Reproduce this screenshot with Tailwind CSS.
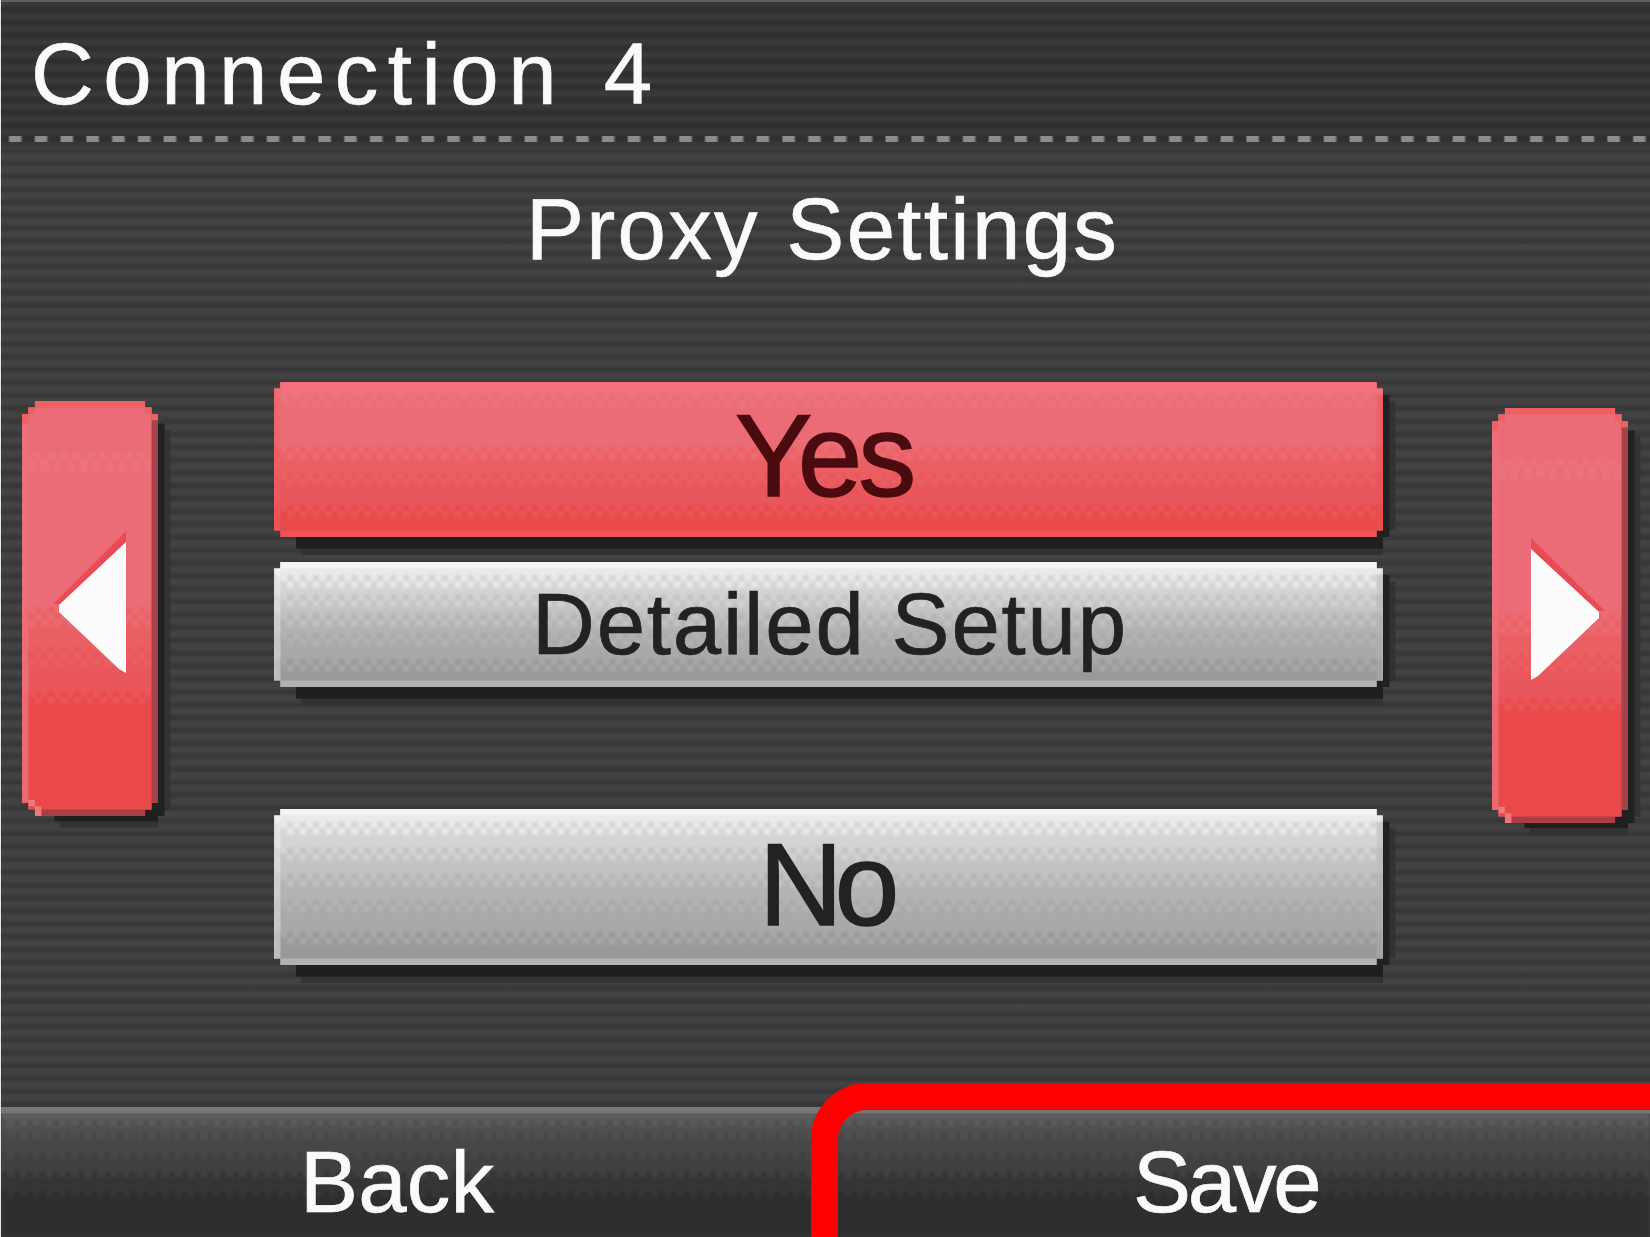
<!DOCTYPE html>
<html lang="en">
<head>
<meta charset="utf-8">
<title>Connection 4 - Proxy Settings</title>
<script src="https://cdn.jsdelivr.net/npm/@tailwindcss/browser@4"></script>
</head>
<body class="overflow-hidden bg-[#3c3c3c]">
<div class="relative flex h-[1237px] w-[1650px] flex-col overflow-hidden border-l border-l-[#e4e4e4] bg-[repeating-linear-gradient(#424242_0px,#424242_4px,#383838_8px,#383838_10.5px,#424242_12.886px)] font-['Liberation_Sans',sans-serif] text-[87px] leading-none text-[#fafafa] [-webkit-text-stroke-width:0.7px]">
  <header class="h-[147px] shrink-0 border-t-2 border-t-[#606060] bg-[repeating-linear-gradient(#393939_0px,#393939_3px,#2f2f2f_6px,#2f2f2f_9px,#393939_12.886px)] pt-[28px]">
    <h1 class="h-[106px] pl-[30px] tracking-[9.5px] whitespace-nowrap [word-spacing:4px]">Connection 4</h1>
    <div class="h-[6px] bg-[repeating-linear-gradient(90deg,transparent_0px,transparent_7px,#8c8c8c_9px,#8c8c8c_19px,transparent_22px,transparent_25.78px)]"></div>
  </header>
  <h2 class="h-[235px] shrink-0 pt-[38px] pl-[525px] tracking-[2.3px]">Proxy Settings</h2>
  <main class="flex h-[725px] shrink-0 items-start">
    <button data-skin="arrow" class="relative mt-[19px] ml-[21px] h-[415px] w-[136px]" aria-label="Previous">
      <svg class="absolute top-[133px] left-[35px] overflow-visible" width="70" height="140" viewBox="0 0 70 140"><path d="M69 -3V8L5 70H-4Z" fill="#e84b55"/><path d="M2 74L69 138V130L8 70Z" fill="#e84b55"/><path d="M69 8V139L62 135L2 78V71Z" fill="#fcfcfc"/></svg>
    </button>
    <div class="ml-[116px] flex w-[1109px] flex-col text-[#222]">
      <button data-skin="yes" class="relative h-[155px] pt-[16px] pl-[461px] text-left text-[116px] leading-none tracking-[-4px] text-[#490b0e] [-webkit-text-stroke-width:1.5px]"><span class="relative block h-[139px]">Yes</span></button>
      <button data-skin="detail" class="relative mt-[25px] h-[125px] pt-[18px] pl-[258px] text-left leading-none tracking-[1.8px]"><span class="relative block h-[107px]">Detailed Setup</span></button>
      <button data-skin="no" class="relative mt-[122px] h-[156px] pt-[18px] pl-[485px] text-left text-[116px] leading-none tracking-[-8px] [-webkit-text-stroke-width:1.5px]"><span class="relative block h-[138px]">No</span></button>
    </div>
    <button data-skin="arrow" class="relative mt-[26px] ml-[109px] h-[415px] w-[136px]" aria-label="Next">
      <svg class="absolute top-[133px] left-[39px] overflow-visible" width="70" height="140" viewBox="0 0 70 140"><path d="M0 -3V8L63 70H74Z" fill="#e84b55"/><path d="M66 74L2 138V130L60 70Z" fill="#e84b55"/><path d="M0 8V139L7 135L68 77V71Z" fill="#fcfcfc"/></svg>
    </button>
  </main>
  <footer data-skin="bar" class="relative flex h-[130px] shrink-0 pt-[31px]">
    <div class="relative w-[819px] pl-[299px] tracking-[0.2px]">Back</div>
    <div class="relative pl-[313px] tracking-[-3.2px]">Save</div>
  </footer>
  <div class="absolute top-[1083px] right-0 bottom-0 left-[810px] rounded-tl-[56px] border-t-[27px] border-l-[27px] border-[#ff0000]"></div>
</div>
<script>
// Each skin is a stack of flat bands; a step [row, colour, n] starts with n checkered rows.
const skins = {
  yes: {w:172, h:24, cut:1, rim:'#f4707c', foot:'#f05458', side:'#f2626a', right:'#ea5253', steps:[[0,'#ec737e',0],[2,'#eb6c76',2],[10,'#ea6062',2],[14,'#e9575c',2],[19,'#e94a48',2]]},
  detail: {w:172, h:19.4, cut:1, rim:'#f4f4f4', foot:'#b2b2b2', side:'url', right:'#b6b6b6', steps:[[0,'#eaeaea',0],[2,'#d4d4d4',2],[5,'#c3c3c3',2],[8,'#b3b3b3',2],[11,'#a9a9a9',2],[15,'#999999',2]]},
  no: {w:172, h:24.2, cut:1, rim:'#f4f4f4', foot:'#b2b2b2', side:'url', right:'#b6b6b6', steps:[[0,'#eaeaea',0],[2,'#d4d4d4',2],[6,'#c3c3c3',2],[10,'#b3b3b3',2],[14,'#a9a9a9',2],[19,'#999999',2]]},
  arrow: {w:21, h:64.4, cut:2, rim:'#ee6062', foot:'#aa3d46', side:'#ec707a', right:'#a5424c', steps:[[0,'#eb6c76',0],[8,'#ec737e',2],[10,'#eb6c76',1],[32,'#ea6062',3],[38,'#e9575c',3],[45,'#e94a48',2]]},
  bar: {w:256, h:20.2, cut:0, rim:'#767676', steps:[[0,'#5b5b5b',0],[2,'#505050',1],[4,'#474747',1],[7,'#404040',1],[10,'#363636',1],[13,'#2d2d2d',1]]}
};
document.querySelectorAll('[data-skin]').forEach((el, i) => {
  const s = skins[el.dataset.skin], {w, h, cut} = s;
  const rect = (x, y, w, h, f, o = 1) => `<rect x="${x}" y="${y}" width="${w}" height="${h}" fill="${f}" opacity="${o}"/>`;
  let defs = '', art = '', prev = '', out = '';
  s.steps.forEach(([y, c, n], k) => {
    art += rect(0, y, w, h - y, c);
    if (n) {
      defs += `<pattern id="d${i}_${k}" width="2" height="2" patternUnits="userSpaceOnUse"><rect x="${(y + 1) % 2}" width="1" height="1" fill="${prev}"/><rect x="${y % 2}" y="1" width="1" height="1" fill="${prev}"/></pattern>`;
      art += rect(cut ? 1 : 0, y, cut ? w - 2 : w, n, `url(#d${i}_${k})`);
    }
    prev = c;
  });
  art = `<g filter="url(#f${i})">${art}</g>` + rect(0, 0, w, 1, s.rim);
  if (cut) {
    art += s.side === 'url' ? rect(0, 0, 1, h, '#fff', .35) : rect(0, 1, 1, h - 1, s.side, cut === 2 ? .8 : .4);
    art += rect(w - 1, 2, 1, h - 2, s.right, cut === 2 ? 1 : .35) + rect(1, h - 1, w - 2, 1, s.foot);
    let p = [];
    if (cut === 1) p = [[1,0],[w-1,0],[w-1,1],[w,1],[w,h-1],[w-1,h-1],[w-1,h],[1,h],[1,h-1],[0,h-1],[0,1],[1,1]];
    else {
      p = [[2,0],[w-2,0],[w-2,1],[w-1,1],[w-1,2],[w,2],[w,h-2],[w-1,h-2],[w-1,h-1],[w-2,h-1],[w-2,h],[2,h],[2,h-1],[1,h-1],[1,h-2],[0,h-2],[0,2],[1,2],[1,1],[2,1]];
      art += rect(1,1,1,1,'#ee6062') + rect(0,2,1,1.5,'#ee6062') + rect(w-2,1,1,1,'#ee6062') + rect(w-1,2,1,1,'#ee6062') + rect(1,h-2.5,1,1,'#ef7780') + rect(2,h-1.5,1,1.5,'#ef7780');
    }
    defs += `<clipPath id="c${i}"><polygon points="${p.join(' ')}"/></clipPath>`;
    const t = cut === 2 ? 4.5 : 3, l = cut === 2 ? 5 : 3.4, b = cut === 2 ? .8 : 1.8;
    out = rect(l + .8, t, w - l - .8, h - t + b + 1, '#303030', .8) + rect(w, t, 1.9, h - t - 1, '#303030', .8) + rect(l, t, w - l, h - t + b, '#1f1f1f') + rect(w - 1, t - 1, 2, h - t + 1, '#212121');
  }
  defs += `<filter id="f${i}" x="0" y="0" width="1" height="1"><feGaussianBlur stdDeviation=".28"/></filter>`;
  el.insertAdjacentHTML('afterbegin', `<svg class="absolute inset-0 h-full w-full overflow-visible" viewBox="0 0 ${w} ${h}" preserveAspectRatio="none"><defs>${defs}</defs>${out}<g${cut ? ` clip-path="url(#c${i})"` : ''}>${rect(0, 0, w, h, s.steps[3][1])}${art}</g></svg>`);
});
</script>
</body>
</html>
